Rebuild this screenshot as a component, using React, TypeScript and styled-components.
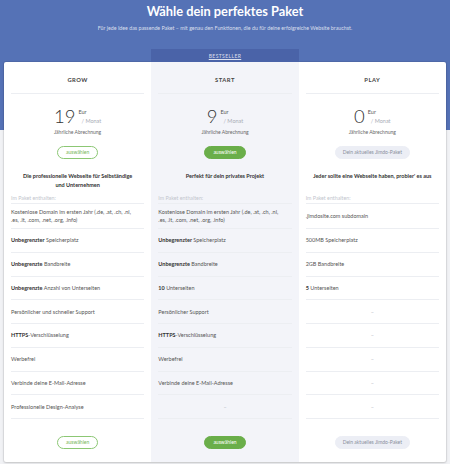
import React from 'react';
import styled, { createGlobalStyle } from 'styled-components';

type Variant = 'outline' | 'solid' | 'current';

interface Feature {
  bold?: string;
  text?: string;
}

interface Plan {
  name: string;
  price: string;
  desc: string;
  variant: Variant;
  featured?: boolean;
  features: (Feature | null)[];
}

const DOMAIN = 'Kostenlose Domain im ersten Jahr (.de, .at, .ch, .nl,\n.es, .it, .com, .net, .org, .info)';

const PLANS: Plan[] = [
  {
    name: 'Grow',
    price: '19',
    desc: 'Die professionelle Webseite für Selbständige\nund Unternehmen',
    variant: 'outline',
    features: [
      { text: DOMAIN },
      { bold: 'Unbegrenzter', text: ' Speicherplatz' },
      { bold: 'Unbegrenzte', text: ' Bandbreite' },
      { bold: 'Unbegrenzte', text: ' Anzahl von Unterseiten' },
      { text: 'Persönlicher und schneller Support' },
      { bold: 'HTTPS', text: '-Verschlüsselung' },
      { text: 'Werbefrei' },
      { text: 'Verbinde deine E-Mail-Adresse' },
      { text: 'Professionelle Design-Analyse' },
    ],
  },
  {
    name: 'Start',
    price: '9',
    desc: 'Perfekt für dein privates Projekt',
    variant: 'solid',
    featured: true,
    features: [
      { text: DOMAIN },
      { bold: 'Unbegrenzter', text: ' Speicherplatz' },
      { bold: 'Unbegrenzte', text: ' Bandbreite' },
      { bold: '10', text: ' Unterseiten' },
      { text: 'Persönlicher Support' },
      { bold: 'HTTPS', text: '-Verschlüsselung' },
      { text: 'Werbefrei' },
      { text: 'Verbinde deine E-Mail-Adresse' },
      null,
    ],
  },
  {
    name: 'Play',
    price: '0',
    desc: "Jeder sollte eine Webseite haben, probier' es aus",
    variant: 'current',
    features: [
      { text: '.jimdosite.com subdomain' },
      { text: '500MB Speicherplatz' },
      { text: '2GB Bandbreite' },
      { bold: '5', text: ' Unterseiten' },
      null,
      null,
      null,
      null,
      null,
    ],
  },
];

const GlobalStyle = createGlobalStyle`
  html, body {
    margin: 0;
    padding: 0;
  }
  body {
    background: #f1f2f5;
    font-family: Lato, "Open Sans", sans-serif;
  }
`;

const Page = styled.div`
  width: 450px;
  height: 464px;
  box-sizing: border-box;
  padding: 3px 4px 0;
  background: linear-gradient(to bottom, #5572b6 0, #5572b6 130px, #f1f2f5 130px);
  overflow: hidden;
`;

const Title = styled.h1`
  margin: 0;
  font-size: 12.8px;
  line-height: 16px;
  font-weight: 700;
  color: #fff;
  text-align: center;
`;

const Subtitle = styled.p`
  margin: 5px 0 0;
  font-size: 5.3px;
  line-height: 8px;
  color: rgba(255, 255, 255, 0.78);
  text-align: center;
`;

const Card = styled.div`
  margin-top: 30px;
  display: grid;
  grid-template-columns: repeat(3, 1fr);
  background: #fff;
  border-radius: 2px;
  box-shadow: 0 0 0 1px rgba(0, 0, 0, 0.06), 0 1px 3px rgba(0, 0, 0, 0.14);
`;

const Column = styled.div<{ $featured?: boolean }>`
  position: relative;
  display: flex;
  flex-direction: column;
  padding: 0 7px 13px;
  background: ${p => (p.$featured ? '#f3f4f9' : 'transparent')};
`;

const Tab = styled.div`
  position: absolute;
  left: 0;
  right: 0;
  bottom: 100%;
  height: 13px;
  background: #4a63a8;
  color: rgba(255, 255, 255, 0.8);
  font-size: 5px;
  letter-spacing: 0.4px;
  text-decoration: underline;
  display: flex;
  align-items: center;
  justify-content: center;
`;

const PlanName = styled.div`
  padding-top: 4px;
  height: 27px;
  line-height: 27px;
  text-align: center;
  text-transform: uppercase;
  font-size: 5.8px;
  font-weight: 700;
  letter-spacing: 0.5px;
  color: #444;
  border-bottom: 1px solid #eceef2;
`;

const PriceRow = styled.div`
  margin-top: 10px;
  height: 24px;
  display: flex;
  justify-content: center;
  align-items: flex-start;
`;

const Amount = styled.span`
  font-size: 18.5px;
  line-height: 24px;
  font-weight: 300;
  color: #333;
`;

const Unit = styled.div`
  margin-left: 3px;
  padding-top: 4px;
  display: flex;
  flex-direction: column;
  font-size: 5.5px;
  line-height: 9px;
  color: #555;
`;

const Period = styled.span`
  padding-left: 3px;
  color: #a9adb6;
`;

const Billing = styled.div`
  font-size: 5px;
  line-height: 8px;
  color: #666;
  text-align: center;
`;

const ButtonRow = styled.div<{ $gap: number }>`
  margin-top: ${p => p.$gap}px;
  display: flex;
  justify-content: center;
`;

const Button = styled.button<{ $variant: Variant }>`
  height: 13px;
  padding: 0 8px;
  border-radius: 7px;
  font-family: inherit;
  font-size: 5px;
  line-height: 11px;
  cursor: pointer;
  ${p => {
    switch (p.$variant) {
      case 'solid':
        return 'background: #6aae4a; border: 1px solid #6aae4a; color: #fff;';
      case 'current':
        return 'background: #eceef5; border: 1px solid #eceef5; color: #8a8f9c; padding: 0 7px;';
      case 'outline':
      default:
        return 'background: #fff; border: 1px solid #8cc774; color: #74b555;';
    }
  }}
`;

const Desc = styled.div`
  margin-top: 13px;
  height: 19px;
  font-size: 5.5px;
  line-height: 9px;
  font-weight: 700;
  color: #333;
  text-align: center;
  white-space: pre-line;
`;

const Included = styled.div`
  margin-top: 3px;
  font-size: 5.3px;
  line-height: 8px;
  padding-bottom: 1px;
  color: #c3c6ce;
  border-bottom: 1px solid #eceef2;
`;

const Row = styled.div<{ $tall?: boolean; $empty?: boolean }>`
  box-sizing: border-box;
  height: ${p => (p.$tall ? 25 : 23.75)}px;
  display: flex;
  align-items: center;
  justify-content: ${p => (p.$empty ? 'center' : 'flex-start')};
  border-bottom: 1px solid #eceef2;
  font-size: 5.5px;
  line-height: 8px;
  white-space: pre-line;
  color: ${p => (p.$empty ? '#b0b4bc' : '#555')};
`;

const Strong = styled.strong`
  font-weight: 700;
  color: #333;
`;

const buttonLabel = (v: Variant) => (v === 'current' ? 'Dein aktuelles Jimdo-Paket' : 'auswählen');

const PlanColumn: React.FC<{ plan: Plan }> = ({ plan }) => (
  <Column $featured={plan.featured}>
    {plan.featured && <Tab>BESTSELLER</Tab>}
    <PlanName>{plan.name}</PlanName>
    <PriceRow>
      <Amount>{plan.price}</Amount>
      <Unit>
        <span>Eur</span>
        <Period>/ Monat</Period>
      </Unit>
    </PriceRow>
    <Billing>Jährliche Abrechnung</Billing>
    <ButtonRow $gap={10}>
      <Button $variant={plan.variant}>{buttonLabel(plan.variant)}</Button>
    </ButtonRow>
    <Desc>{plan.desc}</Desc>
    <Included>Im Paket enthalten:</Included>
    {plan.features.map((f, i) =>
      f ? (
        <Row key={i} $tall={i === 0}>
          <span>
            {f.bold && <Strong>{f.bold}</Strong>}
            {f.text}
          </span>
        </Row>
      ) : (
        <Row key={i} $tall={i === 0} $empty>
          –
        </Row>
      )
    )}
    <ButtonRow $gap={17}>
      <Button $variant={plan.variant}>{buttonLabel(plan.variant)}</Button>
    </ButtonRow>
  </Column>
);

const App: React.FC = () => (
  <>
    <GlobalStyle />
    <Page>
      <Title>Wähle dein perfektes Paket</Title>
      <Subtitle>
        Für jede Idee das passende Paket – mit genau den Funktionen, die du für deine erfolgreiche Website brauchst.
      </Subtitle>
      <Card>
        {PLANS.map(p => (
          <PlanColumn key={p.name} plan={p} />
        ))}
      </Card>
    </Page>
  </>
);

export default App;
